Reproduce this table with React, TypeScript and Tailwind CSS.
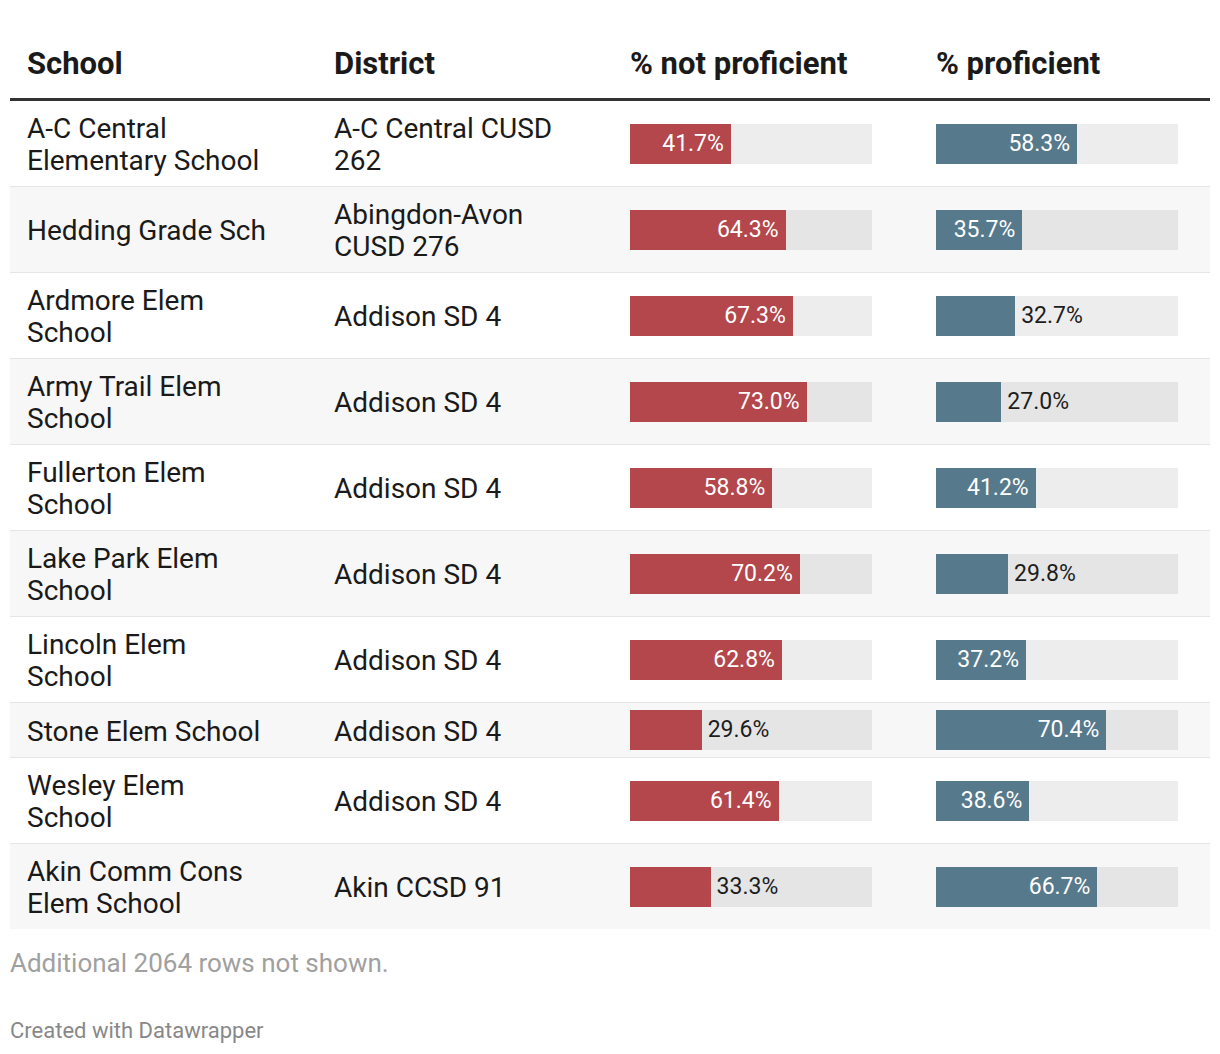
type Row = {
  school: string;
  district: string;
  notProficient: number;
  proficient: number;
};

const rows: Row[] = [
  { school: "A-C Central Elementary School", district: "A-C Central CUSD 262", notProficient: 41.7, proficient: 58.3 },
  { school: "Hedding Grade Sch", district: "Abingdon-Avon CUSD 276", notProficient: 64.3, proficient: 35.7 },
  { school: "Ardmore Elem School", district: "Addison SD 4", notProficient: 67.3, proficient: 32.7 },
  { school: "Army Trail Elem School", district: "Addison SD 4", notProficient: 73.0, proficient: 27.0 },
  { school: "Fullerton Elem School", district: "Addison SD 4", notProficient: 58.8, proficient: 41.2 },
  { school: "Lake Park Elem School", district: "Addison SD 4", notProficient: 70.2, proficient: 29.8 },
  { school: "Lincoln Elem School", district: "Addison SD 4", notProficient: 62.8, proficient: 37.2 },
  { school: "Stone Elem School", district: "Addison SD 4", notProficient: 29.6, proficient: 70.4 },
  { school: "Wesley Elem School", district: "Addison SD 4", notProficient: 61.4, proficient: 38.6 },
  { school: "Akin Comm Cons Elem School", district: "Akin CCSD 91", notProficient: 33.3, proficient: 66.7 },
];

const BAR_WIDTH = 242;

const Bar = ({ value, color }: { value: number; color: "red" | "blue" }) => {
  // small bars put the label after the bar
  const inside = value >= 35;
  const width = (value / 100) * BAR_WIDTH;
  return (
    <div className="flex h-[40px] w-[242px] bg-black/[0.07]">
      <div
        className={`flex h-full items-center justify-end ${color === "red" ? "bg-[#b3474b]" : "bg-[#56798b]"}`}
        style={{ width }}
      >
        {inside && <span className="pr-[7px] text-[23px] text-white">{value.toFixed(1)}%</span>}
      </div>
      {!inside && (
        <div className="flex h-full items-center pl-[6px] text-[23px] text-[#1d1d1d]">{value.toFixed(1)}%</div>
      )}
    </div>
  );
};

export default function App() {
  return (
    <div className="bg-white px-[10px] pt-[30px] font-['Roboto',sans-serif] text-[#1a1a1a]">
      <div className="grid grid-cols-[307px_296px_306px_291px] border-b-[3px] border-[#333]">
        {["School", "District", "% not proficient", "% proficient"].map((h) => (
          <div key={h} className="py-[16px] pl-[17px] text-[31px] font-bold leading-[36px]">
            {h}
          </div>
        ))}
      </div>

      {rows.map((row, i) => (
        <div
          key={row.school}
          className={`grid grid-cols-[307px_296px_306px_291px] items-center text-[28px] leading-[32px] ${
            i % 2 === 1 ? "bg-[#f7f7f7]" : "bg-white"
          } ${i < rows.length - 1 ? "border-b border-[#e6e6e6]" : ""}`}
        >
          <div className="pt-[12px] pb-[9px] pl-[17px]">
            <div className="max-w-[243px]">{row.school}</div>
          </div>
          <div className="pt-[12px] pb-[9px] pl-[17px]">
            <div className="max-w-[243px]">{row.district}</div>
          </div>
          <div className="py-[7px] pl-[17px]">
            <Bar value={row.notProficient} color="red" />
          </div>
          <div className="py-[7px] pl-[17px]">
            <Bar value={row.proficient} color="blue" />
          </div>
        </div>
      ))}

      <p className="mt-[18px] text-[26px] leading-[32px] text-[#a0a0a0]">Additional 2064 rows not shown.</p>
      <p className="mt-[38px] pb-[12px] text-[22px] leading-[28px] text-[#888]">Created with Datawrapper</p>
    </div>
  );
}
